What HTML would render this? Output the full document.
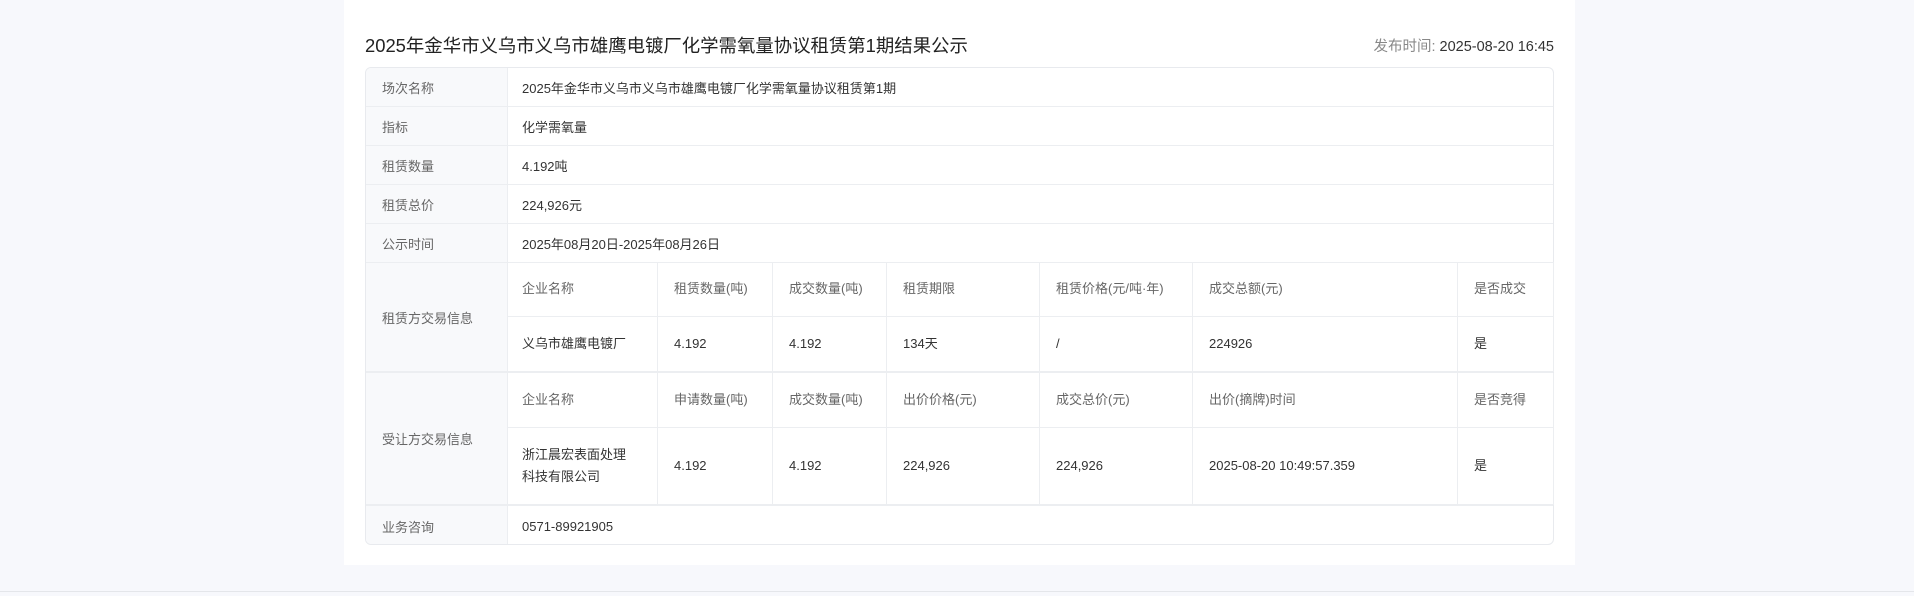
<!DOCTYPE html>
<html><head><meta charset="utf-8"><style>
*{margin:0;padding:0;box-sizing:border-box}
body{width:1914px;height:596px;background:#f7f8fc;font-family:"Liberation Sans","Noto Sans CJK SC",sans-serif;position:relative;overflow:hidden}
.card{position:absolute;left:344px;top:0;width:1231px;height:565px;background:#fff}
.title{position:absolute;left:21px;top:32px;font-size:18.4px;color:#222}
.pub{position:absolute;right:21px;top:35px;font-size:14.5px;color:#333}
.pub span{color:#888}
.tbl{position:absolute;left:21px;top:67px;width:1189px;height:478px;border:1px solid #e8eaee;border-radius:6px;overflow:hidden}
.r{position:absolute;left:0;width:100%;border-bottom:1px solid #eceef1}
.lab{position:absolute;left:0;top:0;bottom:0;width:142px;background:#f8f9fb;border-right:1px solid #eceef1;color:#666;font-size:13px;display:flex;align-items:center;padding-left:16px}
.val{position:absolute;left:156px;top:0;bottom:0;display:flex;align-items:center;font-size:13px;color:#333}
.c{position:absolute;display:flex;align-items:center;font-size:13px;padding-left:15px;border-right:1px solid #eceef1;border-bottom:1px solid #eceef1;line-height:22px}
.h{color:#666}.d{color:#333}
.line{position:absolute;left:0;top:591px;width:1914px;height:1px;background:#e4e6ea}
</style></head><body>
<div class="card">
<div class="title">2025年金华市义乌市义乌市雄鹰电镀厂化学需氧量协议租赁第1期结果公示</div>
<div class="pub"><span>发布时间:</span> 2025-08-20 16:45</div>
<div class="tbl">
<div class="r" style="top:0;height:39px"><div class="lab">场次名称</div><div class="val">2025年金华市义乌市义乌市雄鹰电镀厂化学需氧量协议租赁第1期</div></div>
<div class="r" style="top:39px;height:39px"><div class="lab">指标</div><div class="val">化学需氧量</div></div>
<div class="r" style="top:78px;height:39px"><div class="lab">租赁数量</div><div class="val">4.192吨</div></div>
<div class="r" style="top:117px;height:39px"><div class="lab">租赁总价</div><div class="val">224,926元</div></div>
<div class="r" style="top:156px;height:39px"><div class="lab">公示时间</div><div class="val">2025年08月20日-2025年08月26日</div></div>
<div class="r" style="top:195px;height:110px;border-bottom:2px solid #eceef1"><div class="lab">租赁方交易信息</div></div>
<div class="r" style="top:305px;height:133px;border-bottom:2px solid #eceef1"><div class="lab">受让方交易信息</div></div>
<div class="r" style="top:438px;height:40px;border:none"><div class="lab">业务咨询</div><div class="val">0571-89921905</div></div>
</div>
</div>
<div class="line"></div>
<div id="sub"></div>
<script>
var xs=[508,658,773,887,1040,1193,1458,1554];
var rows=[[262,317,["企业名称","租赁数量(吨)","成交数量(吨)","租赁期限","租赁价格(元/吨·年)","成交总额(元)","是否成交"],"h"],
[317,372,["义乌市雄鹰电镀厂","4.192","4.192","134天","/","224926","是"],"d"],
[373,428,["企业名称","申请数量(吨)","成交数量(吨)","出价价格(元)","成交总价(元)","出价(摘牌)时间","是否竞得"],"h"],
[428,505,["浙江晨宏表面处理<br>科技有限公司","4.192","4.192","224,926","224,926","2025-08-20 10:49:57.359","是"],"d"]];
var h="";rows.forEach(function(r){for(var i=0;i<7;i++){h+='<div class="c '+r[3]+'" style="left:'+xs[i]+'px;top:'+r[0]+'px;width:'+(xs[i+1]-xs[i])+'px;height:'+(r[1]-r[0])+'px;padding-left:'+(i==0?14:16)+'px">'+r[2][i]+'</div>';}});
document.getElementById("sub").innerHTML=h;
</script>
</body></html>
